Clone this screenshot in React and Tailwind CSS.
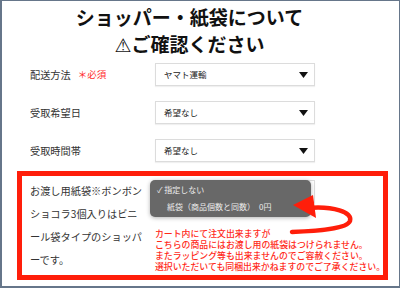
const Caret = () => (
    <svg width="9" height="6" viewBox="0 0 9 6" className="shrink-0">
        <path d="M0 0 H9 L4.5 6 Z" fill="#111" />
    </svg>
);

const Select = ({ value }) => (
    <div className="flex h-[23px] w-[160px] items-center justify-between border border-[#dcdcdc] bg-white pl-[8px] pr-[6px] text-[8.5px] text-[#222] shadow-[0_1px_1px_rgba(0,0,0,0.06)]">
        <span>{value}</span>
        <Caret />
    </div>
);

const rows = [
    { label: "配送方法", value: "ヤマト運輸", required: true },
    { label: "受取希望日", value: "希望なし" },
    { label: "受取時間帯", value: "希望なし" },
];

const App = () => {
    return (
        <div className="relative h-[288px] w-[400px] overflow-hidden border-b-2 border-l-2 border-r border-t border-[#66768a] bg-white font-['Noto_Sans_CJK_JP','Noto_Sans',sans-serif] text-[#333]">
            {/* heading */}
            <h1 className="pr-[22px] pt-[2px] text-center text-[19px] font-bold leading-[27px] text-[#111]">
                ショッパー・紙袋について
                <br />
                <span className="font-['DejaVu_Sans',sans-serif] text-[19px] font-normal">⚠</span>ご確認ください
            </h1>

            <div className="mt-[4px] flex flex-col gap-[15px] pl-[28px]">
                {rows.map((row) => (
                    <div key={row.label} className="grid grid-cols-[125px_160px] items-center">
                        <div className="flex items-center text-[10.2px]">
                            <span>{row.label}</span>
                            {row.required && (
                                <span className="ml-[7px] text-[9.5px] text-[#ff2b2b]">＊必須</span>
                            )}
                        </div>
                        <Select value={row.value} />
                    </div>
                ))}
            </div>

            {/* shopper notice */}
            <div className="ml-[15px] mt-[9px] flex h-[109px] w-[371px] border-[5px] border-[#ff1e0a]">
                <p className="w-[128px] shrink-0 pl-[8px] pt-[3px] text-[10.2px] leading-[23px]">
                    お渡し用紙袋※ボンボン
                    <br />
                    ショコラ3個入りはビニ
                    <br />
                    ール袋タイプのショッパ
                    <br />
                    ーです。
                </p>
                <div className="pt-[4px]">
                    <div className="relative ml-[5px]">
                        <Select value="" />
                        <div className="absolute -left-[5px] top-0 h-[37px] w-[161px] rounded-[5px] bg-[#686868] pt-[1px] text-[8px] leading-[17px] text-[#ededed] shadow-[0_1px_4px_rgba(0,0,0,0.3)]">
                            <div className="pl-[7px]">✓ 指定しない</div>
                            <div className="pl-[17px]">紙袋（商品個数と同数）　0円</div>
                        </div>
                    </div>
                    <p className="ml-[5px] mt-[25px] whitespace-nowrap text-[8.9px] font-medium leading-[11px] text-[#ff2a1a]">
                        カート内にて注文出来ますが
                        <br />
                        こちらの商品にはお渡し用の紙袋はつけられません。
                        <br />
                        またラッピング等も出来ませんのでご容赦ください。
                        <br />
                        選択いただいても同梱出来かねますのでご了承ください。
                    </p>
                </div>
            </div>

            {/* arrow */}
            <svg className="pointer-events-none absolute left-0 top-0" width="400" height="288">
                <path
                    d="M306 207 C331 205 351 211 348 220 C345 228 315 230 290 231"
                    fill="none"
                    stroke="#ff1e0a"
                    strokeWidth="4.5"
                    strokeLinecap="round"
                />
                <path d="M291 204 L311 194 L314 217 Z" fill="#ff1e0a" />
            </svg>
        </div>
    );
};

export default App;
